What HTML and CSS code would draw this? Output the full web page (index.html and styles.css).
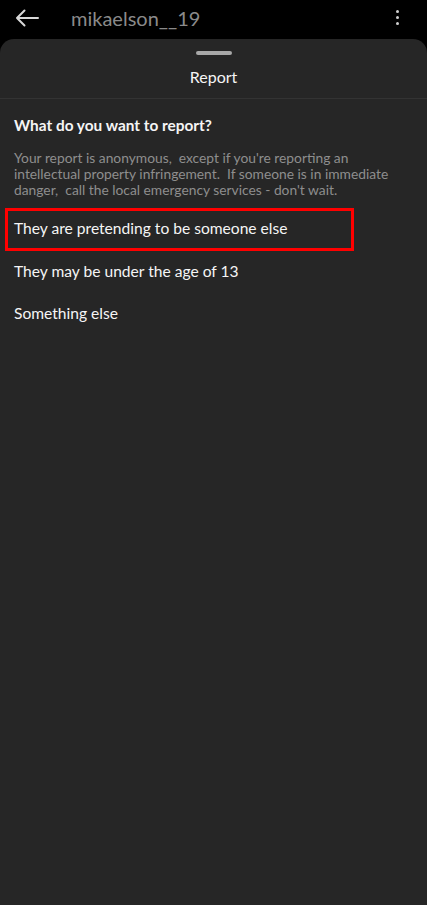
FILE: index.html
```html
<!DOCTYPE html>
<html lang="en">
<head>
<meta charset="UTF-8">
<meta name="viewport" content="width=device-width, initial-scale=1.0">
<title>Report</title>
<link rel="stylesheet" href="styles.css">
</head>
<body>
<div class="topbar">
    <svg class="back" width="24" height="18" viewBox="0 0 24 18">
        <path d="M23 9H2M9.5 1.5L2 9l7.5 7.5" fill="none" stroke="#d8d8d8" stroke-width="2" stroke-linecap="round" stroke-linejoin="round"/>
    </svg>
    <div class="username">mikaelson__19</div>
    <div class="kebab"><span></span><span></span><span></span></div>
</div>

<div class="sheet">
    <div class="handle"></div>
    <div class="sheet-title">Report</div>
    <div class="content">
        <div class="question">What do you want to report?</div>
        <p class="note">Your report is anonymous,&nbsp; except if you're reporting an<br>intellectual property infringement.&nbsp; If someone is in immediate<br>danger,&nbsp; call the local emergency services - don't wait.</p>
        <div class="options">
            <div class="option selected">They are pretending to be someone else</div>
            <div class="option">They may be under the age of 13</div>
            <div class="option">Something else</div>
        </div>
    </div>
</div>
</body>
</html>
```

FILE: styles.css
```css
* {
    box-sizing: border-box;
}

html, body {
    height: 100%;
}

body {
    margin: 0;
    background-color: #000;
    font-family: Lato, "Noto Sans", sans-serif;
    color: #f5f5f5;
    display: flex;
    flex-direction: column;
}

.topbar {
    height: 39px;
    display: flex;
    align-items: center;
    padding: 0 0 4px 15px;
}

.back {
    display: block;
}

.username {
    margin-left: 32px;
    font-size: 20px;
    color: #8a8a8a;
    flex: 1;
}

.kebab {
    display: flex;
    flex-direction: column;
    gap: 3px;
    margin-right: 28px;
}

.kebab span {
    width: 3px;
    height: 3px;
    border-radius: 50%;
    background-color: #cfcfcf;
}

.sheet {
    flex: 1;
    background-color: #262626;
    border-radius: 14px 14px 0 0;
    padding-top: 12px;
}

.handle {
    width: 36px;
    height: 4px;
    border-radius: 2px;
    background-color: #a8a8a8;
    margin: 0 auto;
}

.sheet-title {
    text-align: center;
    font-size: 16px;
    line-height: 20px;
    padding: 12px 0 11px;
    border-bottom: 1px solid #333;
}

.content {
    padding-top: 16px;
}

.question {
    font-size: 15.4px;
    font-weight: 700;
    line-height: 20px;
    padding: 0 14px;
}

.note {
    margin: 15px 0 0;
    padding: 0 14px;
    font-size: 13.8px;
    line-height: 16px;
    color: #8e8e8e;
}

.options {
    margin-top: 10px;
}

.option {
    height: 42.5px;
    display: flex;
    align-items: center;
    padding: 0 0 2px 14px;
    font-size: 15.6px;
}

.option.selected {
    margin-left: 5px;
    width: 349px;
    padding-left: 6px;
    border: 3px solid #ff0000;
}
```
